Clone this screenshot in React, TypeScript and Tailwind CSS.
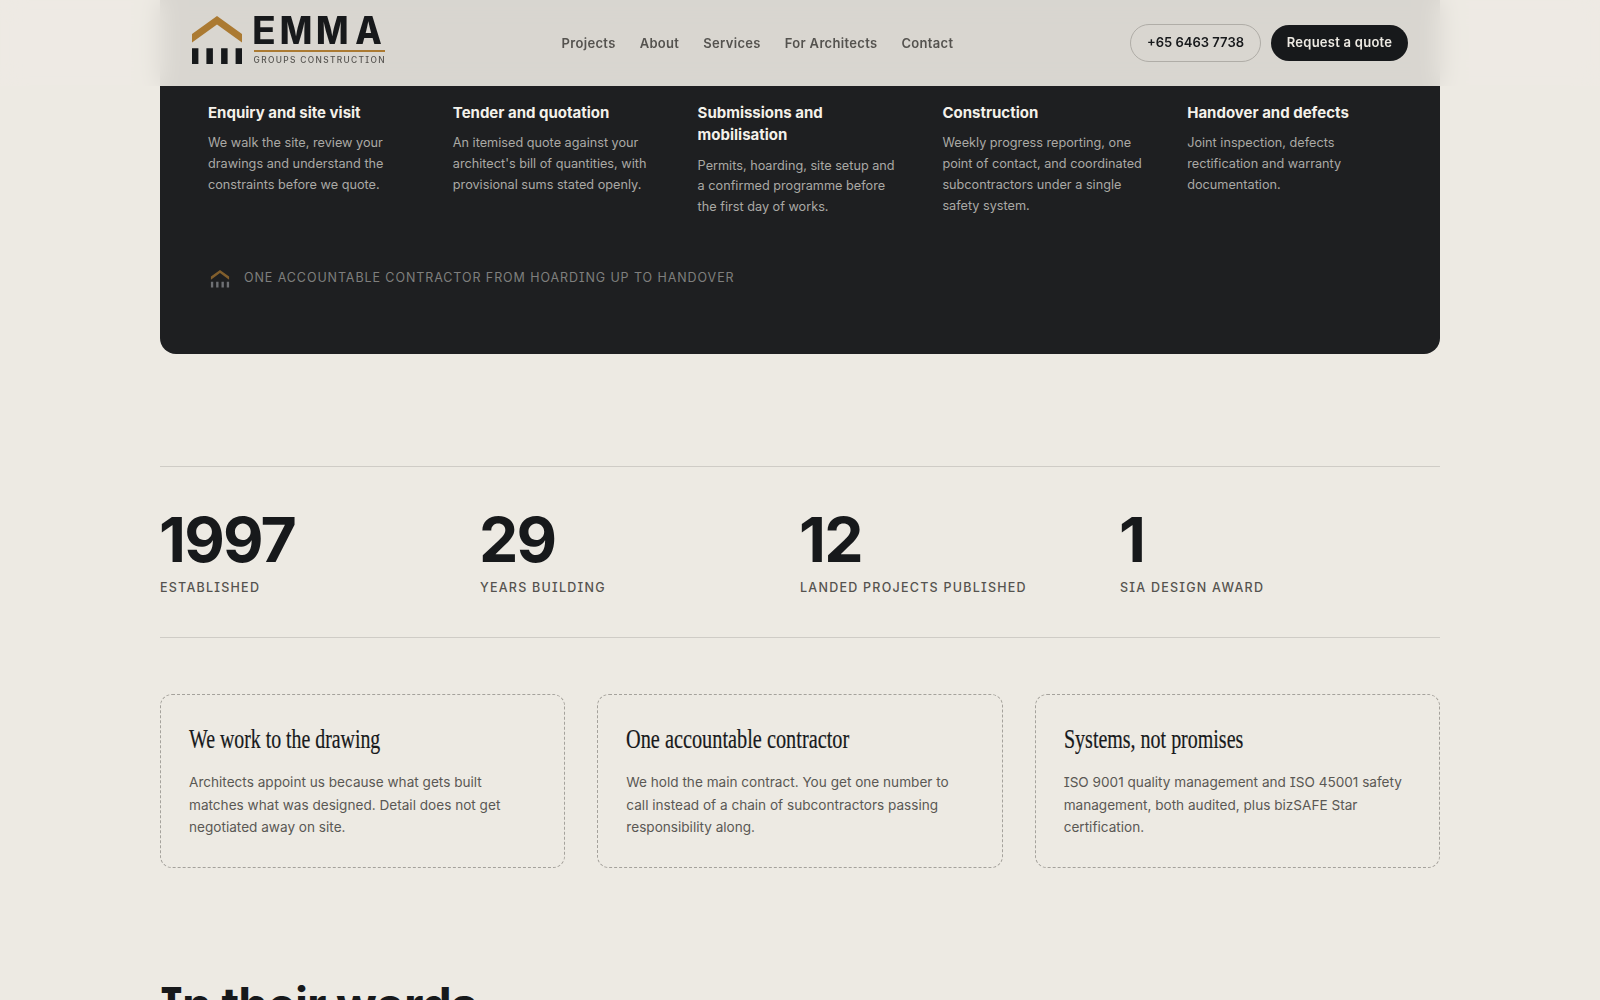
const navLinks = ["Projects", "About", "Services", "For Architects", "Contact"];

const steps = [
  {
    title: "Enquiry and site visit",
    text: "We walk the site, review your drawings and understand the constraints before we quote.",
  },
  {
    title: "Tender and quotation",
    text: "An itemised quote against your architect's bill of quantities, with provisional sums stated openly.",
  },
  {
    title: "Submissions and mobilisation",
    text: "Permits, hoarding, site setup and a confirmed programme before the first day of works.",
  },
  {
    title: "Construction",
    text: "Weekly progress reporting, one point of contact, and coordinated subcontractors under a single safety system.",
  },
  {
    title: "Handover and defects",
    text: "Joint inspection, defects rectification and warranty documentation.",
  },
];

const stats = [
  { value: "1997", label: "Established" },
  { value: "29", label: "Years building" },
  { value: "12", label: "Landed projects published" },
  { value: "1", label: "SIA design award" },
];

const promises = [
  {
    title: "We work to the drawing",
    condense: "scale-x-[0.735]",
    text: "Architects appoint us because what gets built matches what was designed. Detail does not get negotiated away on site.",
  },
  {
    title: "One accountable contractor",
    condense: "scale-x-[0.752]",
    text: "We hold the main contract. You get one number to call instead of a chain of subcontractors passing responsibility along.",
  },
  {
    title: "Systems, not promises",
    condense: "scale-x-[0.74]",
    text: "ISO 9001 quality management and ISO 45001 safety management, both audited, plus bizSAFE Star certification.",
  },
];

// Roof over four columns, shared by the logo and the process footer
function HouseMark() {
  return (
    <>
      <path d="M25 0 50 18v8.6L25 8.4 0 26.6V18z" fill="#ab7a32" />
      <path d="M0 32.3h6.4V48H0zM14.4 32.3h6.5V48h-6.5zM29.1 32.3h6.5V48h-6.5zM43.6 32.3H50V48h-6.4z" fill="currentColor" />
    </>
  );
}

function Logo() {
  return (
    <svg width="193" height="48" viewBox="0 0 193 48" className="overflow-visible text-[#17191b]">
      <HouseMark />
      <g fontSize="38.3" fontWeight="800" fill="currentColor">
        <text transform="scale(1.04 1)" x="57.4" y="27.8" fontWeight="700">E</text>
        <text transform="scale(0.9 1)" x="97.4 137.8 181.3" y="27.8">MMA</text>
      </g>
      <rect x="62" y="34" width="131" height="2" fill="#ab7a32" />
      <text x="61.6" y="47.2" fontSize="8.4" fontWeight="500" textLength="131" fill="#55534f">GROUPS CONSTRUCTION</text>
    </svg>
  );
}

export default function App() {
  return (
    <div className="h-screen overflow-hidden bg-[#edeae3] text-[#17191b] font-[Inter,sans-serif] [font-feature-settings:'cv08']">
      <header className="fixed inset-x-0 top-0 z-10 h-[86px] bg-[#edeae3]/90 backdrop-blur-[12px]">
        <div className="mx-auto flex h-full max-w-7xl items-center justify-between px-8 pb-1.5">
          <Logo />
          <nav className="flex gap-6 pt-[7px] text-[13px] font-semibold tracking-[0.32px] text-[#55534f]">
            {navLinks.map((link) => (
              <a key={link}>{link}</a>
            ))}
          </nav>
          <div className="flex items-center gap-2.5 pt-1.5 text-[13px] font-semibold">
            <a className="flex h-[38px] w-[131px] items-center justify-center rounded-full border border-[#b0ada7]">+65 6463 7738</a>
            <a className="flex h-9 w-[137px] items-center justify-center rounded-full bg-[#17191b] tracking-[0.25px] text-[#edeae3]">Request a quote</a>
          </div>
        </div>
      </header>

      <main className="mx-auto max-w-7xl">
        <section className="rounded-b-2xl bg-[#1e1f21] px-12 pt-[101.7px] pb-16">
          <div className="grid grid-cols-5 gap-10">
            {steps.map((step) => (
              <div key={step.title}>
                <h3 className="text-[15px] leading-[22.4px] font-bold text-[#f4f1ea]">{step.title}</h3>
                <p className="mt-[9px] text-[12.7px] leading-[20.9px] text-[#aaa9a5]">{step.text}</p>
              </div>
            ))}
          </div>
          <div className="mt-12 flex items-center gap-3">
            <svg width="24" height="24" viewBox="-8 -11 66 66" className="text-[#909398] opacity-70">
              <HouseMark />
            </svg>
            <p className="text-[12.5px] tracking-[0.92px] text-[#7f7f7e] uppercase">
              One accountable contractor from hoarding up to handover
            </p>
          </div>
        </section>

        <section className="mt-28 grid grid-cols-4 border-y border-[#cfccc6] pt-[40.4px] pb-[39.3px]">
          {stats.map((stat) => (
            <div key={stat.label}>
              <div className="-ml-px text-[62.5px] leading-[62px] font-bold tracking-[-1.8px]">{stat.value}</div>
              <div className="mt-[8.5px] text-[12.5px] leading-5 font-medium tracking-[1.25px] text-[#55534f] uppercase">{stat.label}</div>
            </div>
          ))}
        </section>

        <section className="mt-14 grid grid-cols-3 gap-8">
          {promises.map((item) => (
            <div key={item.title} className="h-[174px] rounded-xl border border-dashed border-[#a5a29c] p-7">
              <h3 className={`${item.condense} origin-left font-['Liberation_Serif',serif] text-[27px] leading-8 whitespace-nowrap [-webkit-text-stroke:0.2px_#17191b]`}>{item.title}</h3>
              <p className="mt-4 text-[13.6px] leading-[22.4px] text-[#5a5854]">{item.text}</p>
            </div>
          ))}
        </section>

        <h2 className="mt-[110.5px] text-5xl leading-[52px] font-bold tracking-[-0.9px]">In their words</h2>
      </main>
    </div>
  );
}
